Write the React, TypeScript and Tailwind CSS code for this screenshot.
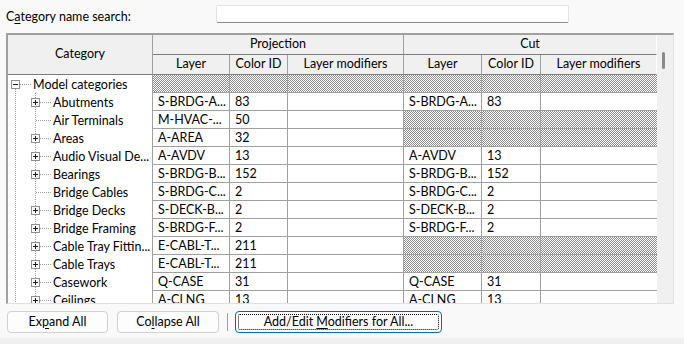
import React from "react";

const COLS = "grid grid-cols-[145px_77px_58px_116px_78px_59px_116px]";
const HATCH =
  "bg-[image:repeating-conic-gradient(#8c8c8c_0%_25%,#ffffff_0%_50%)] bg-size-[2px_2px]";

type Cell = string | null; // null = hatched
type Row = { name: string; box: "minus" | "plus" | "none"; root?: boolean; cells: Cell[] };

const rows: Row[] = [
  { name: "Model categories", box: "minus", root: true, cells: [null, null, null, null, null, null] },
  { name: "Abutments", box: "plus", cells: ["S-BRDG-A...", "83", "", "S-BRDG-A...", "83", ""] },
  { name: "Air Terminals", box: "none", cells: ["M-HVAC-...", "50", "", null, null, null] },
  { name: "Areas", box: "plus", cells: ["A-AREA", "32", "", null, null, null] },
  { name: "Audio Visual De...", box: "plus", cells: ["A-AVDV", "13", "", "A-AVDV", "13", ""] },
  { name: "Bearings", box: "plus", cells: ["S-BRDG-B...", "152", "", "S-BRDG-B...", "152", ""] },
  { name: "Bridge Cables", box: "none", cells: ["S-BRDG-C...", "2", "", "S-BRDG-C...", "2", ""] },
  { name: "Bridge Decks", box: "plus", cells: ["S-DECK-B...", "2", "", "S-DECK-B...", "2", ""] },
  { name: "Bridge Framing", box: "plus", cells: ["S-BRDG-F...", "2", "", "S-BRDG-F...", "2", ""] },
  { name: "Cable Tray Fittin...", box: "plus", cells: ["E-CABL-T...", "211", "", null, null, null] },
  { name: "Cable Trays", box: "plus", cells: ["E-CABL-T...", "211", "", null, null, null] },
  { name: "Casework", box: "plus", cells: ["Q-CASE", "31", "", "Q-CASE", "31", ""] },
  { name: "Ceilings", box: "plus", cells: ["A-CLNG", "13", "", "A-CLNG", "13", ""] },
];

function TreeGlyph({ row }: { row: Row }) {
  const dot = { stroke: "#9a9a9a", strokeWidth: 1, strokeDasharray: "1 1" } as const;
  if (row.root) {
    return (
      <svg width="25" height="18" className="shrink-0">
        <line x1="7.5" y1="14" x2="7.5" y2="18" {...dot} />
        <line x1="12" y1="9.5" x2="23" y2="9.5" {...dot} />
        <rect x="3.5" y="5.5" width="8" height="8" fill="#fafafa" stroke="#919191" />
        <line x1="5" y1="9.5" x2="10" y2="9.5" stroke="#1a1a1a" />
      </svg>
    );
  }
  return (
    <svg width="45" height="18" className="shrink-0">
      <line x1="7.5" y1="0" x2="7.5" y2="18" {...dot} />
      <line x1="27.5" y1="0" x2="27.5" y2="18" {...dot} />
      <line x1="28" y1="9.5" x2="43" y2="9.5" {...dot} />
      {row.box === "plus" && (
        <>
          <rect x="23.5" y="5.5" width="8" height="8" fill="#fafafa" stroke="#919191" />
          <line x1="25" y1="9.5" x2="30" y2="9.5" stroke="#1a1a1a" />
          <line x1="27.5" y1="7" x2="27.5" y2="12" stroke="#1a1a1a" />
        </>
      )}
    </svg>
  );
}

function Btn({ children, w, focus }: { children: React.ReactNode; w: string; focus?: boolean }) {
  return (
    <div
      className={`relative h-[22px] ${w} shrink-0 rounded-[4px] border bg-[#fdfdfd] flex items-center justify-center text-[12.5px] text-black ${
        focus ? "border-[#0067c0]" : "border-[#d0d0d0]"
      }`}
    >
      {focus && <div className="absolute inset-[2px] border border-dotted border-black rounded-[2px]" />}
      <span className="relative">{children}</span>
    </div>
  );
}

export default function App() {
  return (
    <div
      className="w-[684px] h-[344px] bg-[#f9f9f9] flex flex-col overflow-hidden text-black"
      style={{ fontFamily: 'Lato, "Noto Sans", sans-serif' }}
    >
      {/* search bar */}
      <div className="flex items-start pt-[5px] h-[23px] shrink-0">
        <div className="w-[216px] pl-[6px] pt-[3px] text-[12.5px] leading-[18px]">
          C<span className="underline underline-offset-2">a</span>tegory name search:
        </div>
        <div className="w-[353px] h-[18px] bg-white border border-[#e2e2e2] border-b-[#8a8a8a] rounded-[2px]" />
      </div>

      {/* grid */}
      <div className="mt-[10px] ml-[6px] w-[668px] h-[271px] shrink-0 border-t-2 border-l-2 border-[#a0a0a0] border-r border-b border-r-[#e0e0e0] border-b-[#e0e0e0] flex bg-white overflow-hidden">
        <div className="w-[649px] flex flex-col text-[12.5px]">
          {/* header */}
          <div className={`${COLS} grid-rows-[20px_20px] bg-[#f0f0f0] shrink-0`}>
            <div className="row-span-2 border-r border-b border-r-[#a0a0a0] border-b-[#7a7a7a] flex items-center justify-center">
              Category
            </div>
            <div className="col-span-3 border-r border-b border-r-[#a0a0a0] border-b-[#7a7a7a] flex items-center justify-center">
              Projection
            </div>
            <div className="col-span-3 border-r border-b border-r-white border-b-[#7a7a7a] flex items-center justify-center">
              Cut
            </div>
            {["Layer", "Color ID", "Layer modifiers", "Layer", "Color ID", "Layer modifiers"].map((h, i) => (
              <div
                key={i}
                className={`border-b border-r border-b-[#7a7a7a] flex items-center justify-center ${
                  i === 5 ? "border-r-white" : "border-r-[#a0a0a0]"
                }`}
              >
                {h}
              </div>
            ))}
          </div>

          {/* body */}
          <div className="flex-1 overflow-hidden">
            {rows.map((r, ri) => (
              <div key={ri} className={`${COLS} h-[18px]`}>
                <div className="border-r border-[#a0a0a0] flex items-center overflow-hidden whitespace-nowrap">
                  <TreeGlyph row={r} />
                  <span className="leading-[17px]">{r.name}</span>
                </div>
                {r.cells.map((c, ci) => (
                  <div
                    key={ci}
                    className={`border-b border-[#a0a0a0] ${ci === 5 ? "" : "border-r"} flex items-center pl-[5px] whitespace-nowrap overflow-hidden leading-[17px] ${
                      c === null ? HATCH : ""
                    }`}
                  >
                    {c}
                  </div>
                ))}
              </div>
            ))}
          </div>
        </div>
        {/* scrollbar */}
        <div className="w-[16px] bg-[#f0f0f0] flex flex-col">
          <div className="ml-[5px] mt-[17px] w-[3px] h-[17px] rounded-full bg-[#8a8a8a]" />
        </div>
      </div>

      {/* buttons */}
      <div className="flex items-center mt-[7px] h-[22px] shrink-0">
        <div className="ml-[7px]">
          <Btn w="w-[101px]">
            Ex<span className="underline underline-offset-2">p</span>and All
          </Btn>
        </div>
        <div className="ml-[9px]">
          <Btn w="w-[102px]">
            Co<span className="underline underline-offset-2">l</span>lapse All
          </Btn>
        </div>
        <div className="ml-[8px] w-px h-[18px] bg-[#a0a0a0]" />
        <div className="ml-[7px]">
          <Btn w="w-[207px]" focus>
            Add/Edit <span className="underline underline-offset-2">M</span>odifiers for All...
          </Btn>
        </div>
      </div>
      <div className="mt-[5px] flex-1 bg-[#f0f0f0]" />
    </div>
  );
}
